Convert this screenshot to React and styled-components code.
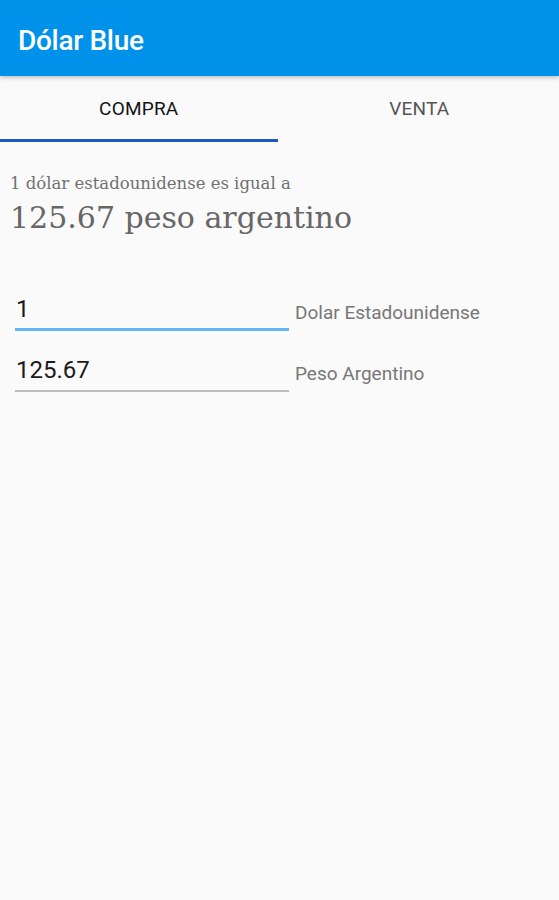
import styled, { createGlobalStyle } from 'styled-components';

const GlobalStyle = createGlobalStyle`
    html, body {
        margin: 0;
        padding: 0;
        background: #fafafa;
    }
    body {
        font-family: Roboto, 'Noto Sans', sans-serif;
    }
`;

const rows = [
    { value: '1', label: 'Dolar Estadounidense', focused: true },
    { value: '125.67', label: 'Peso Argentino', focused: false },
];

const App = () => {
    return (
        <Screen>
            <GlobalStyle />
            <AppBar>
                <Title>Dólar Blue</Title>
            </AppBar>
            <Tabs>
                <Tab $active>COMPRA</Tab>
                <Tab>VENTA</Tab>
            </Tabs>
            <Content>
                <Caption>1 dólar estadounidense es igual a</Caption>
                <Result>125.67 peso argentino</Result>
                <Form>
                    {rows.map((row) => (
                        <Row key={row.label}>
                            <Field $focused={row.focused} defaultValue={row.value} />
                            <FieldLabel>{row.label}</FieldLabel>
                        </Row>
                    ))}
                </Form>
            </Content>
        </Screen>
    );
};

export default App;

const Screen = styled.div`
    min-height: 900px;
    background: #fafafa;
`;

const AppBar = styled.header`
    height: 76px;
    background: #0091ea;
    display: flex;
    align-items: center;
    padding: 4px 18px 0 18px;
    box-sizing: border-box;
    box-shadow: 0 2px 4px rgba(0, 0, 0, 0.22);
    position: relative;
    z-index: 1;
`;

const Title = styled.h1`
    margin: 0;
    font-family: Roboto, sans-serif;
    font-size: 28px;
    font-weight: 500;
    color: #ffffff;
    letter-spacing: -0.3px;
`;

const Tabs = styled.nav`
    display: grid;
    grid-template-columns: 1fr 1fr;
    height: 66px;
`;

const Tab = styled.div`
    display: flex;
    align-items: center;
    justify-content: center;
    font-family: Roboto, sans-serif;
    font-size: 19px;
    font-weight: 400;
    letter-spacing: 0.2px;
    color: ${(p) => (p.$active ? '#141414' : '#555555')};
    box-sizing: border-box;
    border-bottom: 3px solid ${(p) => (p.$active ? '#1d56c2' : 'transparent')};
    margin-right: ${(p) => (p.$active ? '2px' : '0')};
    padding-top: 2px;
`;

const Content = styled.main`
    padding: 32px 10px 0 10px;
`;

const Caption = styled.div`
    font-family: 'DejaVu Serif', 'Liberation Serif', serif;
    font-size: 16.5px;
    color: #707070;
`;

const Result = styled.div`
    font-family: 'DejaVu Serif', 'Liberation Serif', serif;
    font-size: 30px;
    color: #676767;
    margin-top: 7px;
`;

const Form = styled.div`
    display: flex;
    flex-direction: column;
    gap: 25px;
    padding: 60px 0 0 5px;
`;

const Row = styled.div`
    display: flex;
    align-items: center;
    gap: 6px;
`;

const Field = styled.input`
    width: 274px;
    box-sizing: border-box;
    border: none;
    border-bottom: ${(p) => (p.$focused ? '3px solid #64b5f6' : '2px solid #bdbdbd')};
    background: transparent;
    font-family: Roboto, sans-serif;
    font-size: 24px;
    color: #1a1a1a;
    padding: 0 0 ${(p) => (p.$focused ? '5px' : '6px')} 1px;
    outline: none;
`;

const FieldLabel = styled.span`
    font-family: Roboto, sans-serif;
    font-size: 19px;
    color: #777777;
    padding-bottom: 2px;
`;
